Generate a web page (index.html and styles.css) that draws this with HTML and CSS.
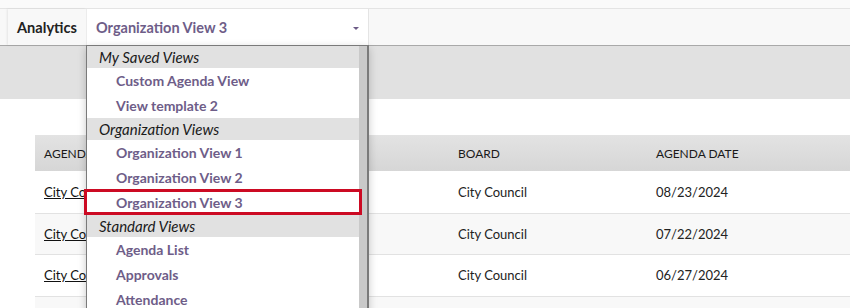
FILE: index.html
```html
<!DOCTYPE html>
<html>
<head>
<meta charset="utf-8">
<link rel="stylesheet" href="styles.css">
</head>
<body>
<div class="page">
  <div class="topstrip"></div>
  <div class="toolbar">
    <div class="label">Analytics</div>
    <div class="select">
      <span class="select-text">Organization View 3</span>
      <span class="caret"></span>
    </div>
  </div>
  <div class="band"></div>
  <div class="content">
    <table class="grid">
      <thead>
        <tr><th class="c1">Agenda</th><th class="c2">Board</th><th class="c3">Agenda Date</th></tr>
      </thead>
      <tbody>
        <tr><td><a href="#">City Council Regular Meeting</a></td><td>City Council</td><td>08/23/2024</td></tr>
        <tr class="alt"><td><a href="#">City Council Regular Meeting</a></td><td>City Council</td><td>07/22/2024</td></tr>
        <tr><td><a href="#">City Council Regular Meeting</a></td><td>City Council</td><td>06/27/2024</td></tr>
        <tr class="alt"><td></td><td></td><td></td></tr>
      </tbody>
    </table>
  </div>

  <div class="dropdown">
    <div class="list">
      <div class="group">My Saved Views</div>
      <div class="item">Custom Agenda View</div>
      <div class="item">View template 2</div>
      <div class="group">Organization Views</div>
      <div class="item">Organization View 1</div>
      <div class="item">Organization View 2</div>
      <div class="item selected">Organization View 3</div>
      <div class="group">Standard Views</div>
      <div class="item">Agenda List</div>
      <div class="item">Approvals</div>
      <div class="item">Attendance</div>
    </div>
    <div class="scrollbar"></div>
  </div>
</div>
</body>
</html>
```

FILE: styles.css
```css
* { box-sizing: border-box; }
html, body { margin: 0; padding: 0; }
body {
  font-family: Lato, "Open Sans", sans-serif;
  background: #ffffff;
  color: #222;
  overflow: hidden;
}
.page {
  position: relative;
  width: 850px;
  height: 308px;
  overflow: hidden;
}
.topstrip {
  height: 9px;
  background: #fafafa;
  border-bottom: 1px solid #e4e4e4;
}
.toolbar {
  height: 37px;
  display: flex;
  background: #f8f8f8;
  border-bottom: 1px solid #a9a9a9;
  padding-left: 8px;
}
.label {
  display: flex;
  align-items: center;
  padding: 0 9px;
  width: 78px;
  font-size: 14.6px;
  font-weight: 700;
  color: #222;
  background: #f8f8f8;
  box-shadow: -1px 0 2px rgba(0,0,0,0.08);
}
.select {
  width: 283px;
  display: flex;
  align-items: center;
  justify-content: space-between;
  padding: 0 9px 0 9px;
  background: #ffffff;
  border-left: 1px solid #ececec;
  border-right: 1px solid #e4e4e4;
}
.select-text {
  font-size: 14.5px;
  font-weight: 700;
  color: #6e5d88;
}
.caret {
  width: 0;
  height: 0;
  border-left: 3px solid transparent;
  border-right: 3px solid transparent;
  border-top: 3px solid #6c5b86;
  margin-top: 2px;
}
.band {
  height: 53px;
  background: #e1e1e1;
}
.content {
  padding: 36px 0 0 35px;
}
.grid {
  border-collapse: collapse;
  width: 830px;
  table-layout: fixed;
}
.grid th {
  height: 36px;
  text-align: left;
  font-size: 12px;
  font-weight: 400;
  text-transform: uppercase;
  color: #1a1a1a;
  padding: 0 9px;
  background: linear-gradient(#e3e3e3, #d6d6d6);
}
.c1 { width: 414px; }
.c2 { width: 198px; }
.grid td {
  height: 42px;
  padding: 0 9px;
  font-size: 13px;
  color: #222;
  border-bottom: 1px solid #e2e2e2;
  white-space: nowrap;
  overflow: hidden;
}
.grid tbody tr:nth-child(2) td { height: 41px; }
.grid a { color: #111; text-decoration: underline; }
.grid tr.alt td { background: #f8f8f8; }

.dropdown {
  position: absolute;
  left: 86px;
  top: 45px;
  width: 283px;
  height: 270px;
  display: flex;
  background: #ffffff;
  border: 1px solid #7a7a7a;
  border-right-width: 2px;
  box-shadow: 0 3px 8px rgba(0,0,0,0.22);
}
.list {
  flex: 1;
  position: relative;
}
.group {
  height: 22px;
  display: flex;
  align-items: center;
  padding-left: 12px;
  background: #e1e1e1;
  font-size: 15px;
  font-style: italic;
  color: #1a1a1a;
}
.item {
  position: relative;
  height: 25px;
  display: flex;
  align-items: center;
  padding-left: 29px;
  font-size: 14px;
  font-weight: 700;
  color: #6e5d88;
}
.item.selected::after {
  content: "";
  position: absolute;
  left: -3px;
  right: -3px;
  top: -1px;
  bottom: 0;
  border: 3px solid #cc0a23;
  z-index: 2;
}
.scrollbar {
  width: 8px;
  background: #c9c9c9;
}
```
